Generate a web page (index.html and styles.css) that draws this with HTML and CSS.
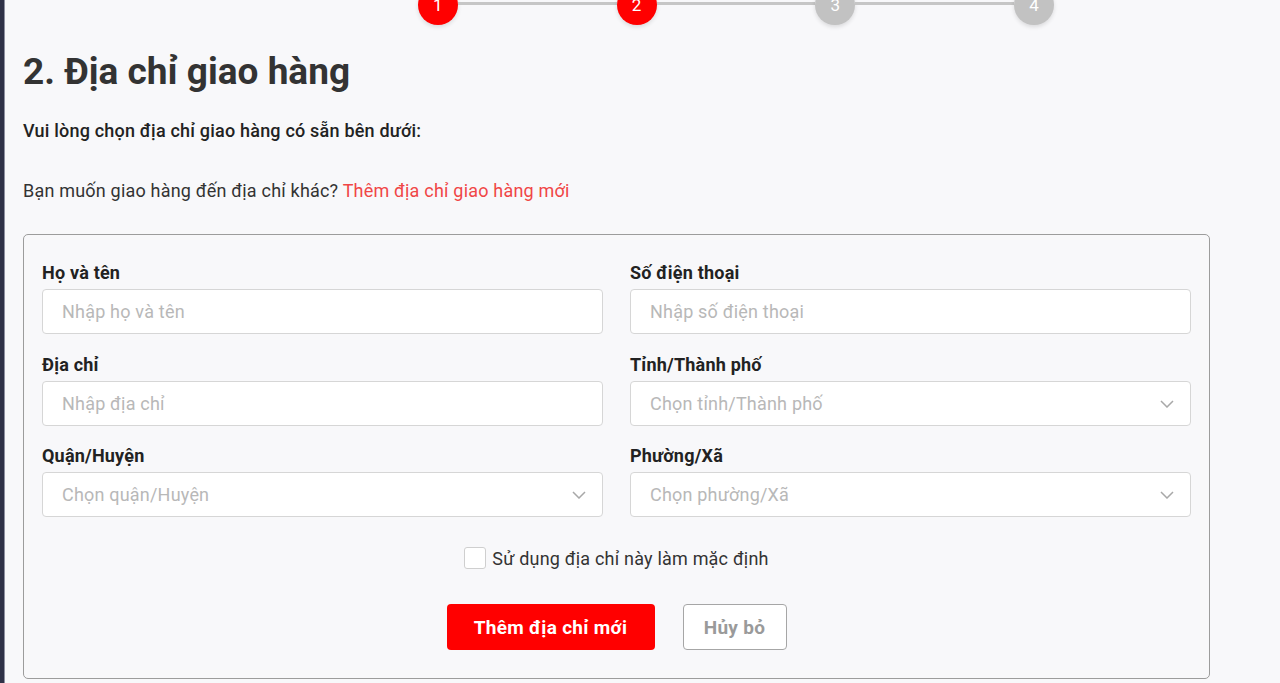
FILE: index.html
```html
<!DOCTYPE html>
<html lang="vi">
<head>
  <meta charset="UTF-8">
  <meta name="viewport" content="width=device-width, initial-scale=1.0">
  <title>Địa chỉ giao hàng</title>
  <link rel="stylesheet" href="styles.css">
</head>
<body>
  <main class="checkout">
    <ol class="stepper">
      <li class="step done">1</li>
      <li class="step-line"></li>
      <li class="step done">2</li>
      <li class="step-line"></li>
      <li class="step">3</li>
      <li class="step-line"></li>
      <li class="step">4</li>
    </ol>

    <h1 class="title">2. Địa chỉ giao hàng</h1>
    <p class="intro">Vui lòng chọn địa chỉ giao hàng có sẵn bên dưới:</p>
    <p class="other">Bạn muốn giao hàng đến địa chỉ khác? <a href="#" class="link">Thêm địa chỉ giao hàng mới</a></p>

    <form class="address-form">
      <div class="form-grid">
        <div class="field">
          <label for="fullName">Họ và tên</label>
          <input type="text" id="fullName" placeholder="Nhập họ và tên">
        </div>
        <div class="field">
          <label for="phone">Số điện thoại</label>
          <input type="text" id="phone" placeholder="Nhập số điện thoại">
        </div>
        <div class="field">
          <label for="address">Địa chỉ</label>
          <input type="text" id="address" placeholder="Nhập địa chỉ">
        </div>
        <div class="field">
          <label for="city">Tỉnh/Thành phố</label>
          <div class="select-wrap">
            <select id="city"><option>Chọn tỉnh/Thành phố</option></select>
            <svg class="chevron" width="14" height="8" viewBox="0 0 14 8"><path d="M1 1l6 6 6-6" fill="none" stroke="#a8a8a8" stroke-width="1.5"/></svg>
          </div>
        </div>
        <div class="field">
          <label for="district">Quận/Huyện</label>
          <div class="select-wrap">
            <select id="district"><option>Chọn quận/Huyện</option></select>
            <svg class="chevron" width="14" height="8" viewBox="0 0 14 8"><path d="M1 1l6 6 6-6" fill="none" stroke="#a8a8a8" stroke-width="1.5"/></svg>
          </div>
        </div>
        <div class="field">
          <label for="ward">Phường/Xã</label>
          <div class="select-wrap">
            <select id="ward"><option>Chọn phường/Xã</option></select>
            <svg class="chevron" width="14" height="8" viewBox="0 0 14 8"><path d="M1 1l6 6 6-6" fill="none" stroke="#a8a8a8" stroke-width="1.5"/></svg>
          </div>
        </div>
      </div>

      <label class="check-row">
        <input type="checkbox" class="check">
        <span>Sử dụng địa chỉ này làm mặc định</span>
      </label>

      <div class="actions">
        <button type="button" class="btn btn-primary">Thêm địa chỉ mới</button>
        <button type="button" class="btn btn-cancel">Hủy bỏ</button>
      </div>
    </form>
  </main>
</body>
</html>
```

FILE: styles.css
```css
body {
  font-family: Roboto, "Noto Sans", Arial, sans-serif;
  letter-spacing: 0.2px;
  margin: 0;
  padding: 0;
  background-color: #f8f8fa;
  color: #333;
  border-left: 4px solid #2f3147;
  min-height: 683px;
  box-shadow: inset 1px 0 #8e90a0;
  overflow: hidden;
}

.checkout {
  padding: 0 70px 0 19px;
}

.stepper {
  list-style: none;
  display: flex;
  align-items: flex-start;
  margin: -15px 0 0 395px;
  padding: 0;
  width: 636px;
}

.step {
  width: 40px;
  height: 40px;
  border-radius: 50%;
  background-color: #c2c2c2;
  color: white;
  font-size: 17px;
  line-height: 40px;
  text-align: center;
  box-shadow: 0 2px 4px rgba(0, 0, 0, 0.12);
  flex-shrink: 0;
}

.step.done {
  background-color: #ff0000;
}

.step-line {
  flex: 1;
  height: 3px;
  margin-top: 17px;
  background-color: #c6c6c6;
}

.title {
  font-size: 37px;
  font-weight: 700;
  letter-spacing: 0;
  line-height: 43px;
  color: #333;
  margin: 25px 0 0;
}

.intro {
  font-size: 18px;
  font-weight: 500;
  line-height: 24px;
  color: #222;
  margin: 26px 0 0;
}

.other {
  font-size: 18px;
  line-height: 24px;
  color: #333;
  margin: 36px 0 0;
}

.link {
  color: #f04646;
  text-decoration: none;
}

.address-form {
  margin-top: 31px;
  border: 1px solid #9c9c9c;
  border-radius: 5px;
  padding: 26px 18px 28px;
}

.form-grid {
  display: grid;
  grid-template-columns: 1fr 1fr;
  column-gap: 27px;
  row-gap: 18.5px;
}

.field label {
  display: block;
  font-size: 18px;
  font-weight: 700;
  line-height: 24px;
  color: #222;
  margin-bottom: 4px;
}

.field input,
.field select {
  display: block;
  width: 100%;
  box-sizing: border-box;
  height: 45px;
  border: 1px solid #d6d6d6;
  border-radius: 4px;
  background-color: white;
  padding: 0 19px;
  font-family: inherit;
  font-size: 18px;
  letter-spacing: 0.2px;
  color: #333;
  outline: none;
}

.field input::placeholder {
  color: #b8b8b8;
}

.field select {
  appearance: none;
  color: #b8b8b8;
}

.select-wrap {
  position: relative;
}

.chevron {
  position: absolute;
  right: 17px;
  top: 19px;
  pointer-events: none;
}

.check-row {
  display: flex;
  align-items: center;
  justify-content: center;
  gap: 6px;
  margin-top: 30px;
  font-size: 18px;
  color: #333;
}

.check {
  appearance: none;
  width: 22px;
  height: 22px;
  margin: 0;
  border: 1px solid #cfcfcf;
  border-radius: 3px;
  background-color: white;
}

.actions {
  display: flex;
  justify-content: center;
  gap: 28px;
  margin-top: 35px;
}

.btn {
  height: 46px;
  border-radius: 4px;
  font-family: inherit;
  font-size: 19px;
  font-weight: 700;
  letter-spacing: 0.3px;
  cursor: pointer;
}

.btn-primary {
  width: 208px;
  border: none;
  background-color: #ff0000;
  color: white;
}

.btn-cancel {
  width: 104px;
  border: 1px solid #a6a6a6;
  background-color: white;
  color: #9a9a9a;
}
```
